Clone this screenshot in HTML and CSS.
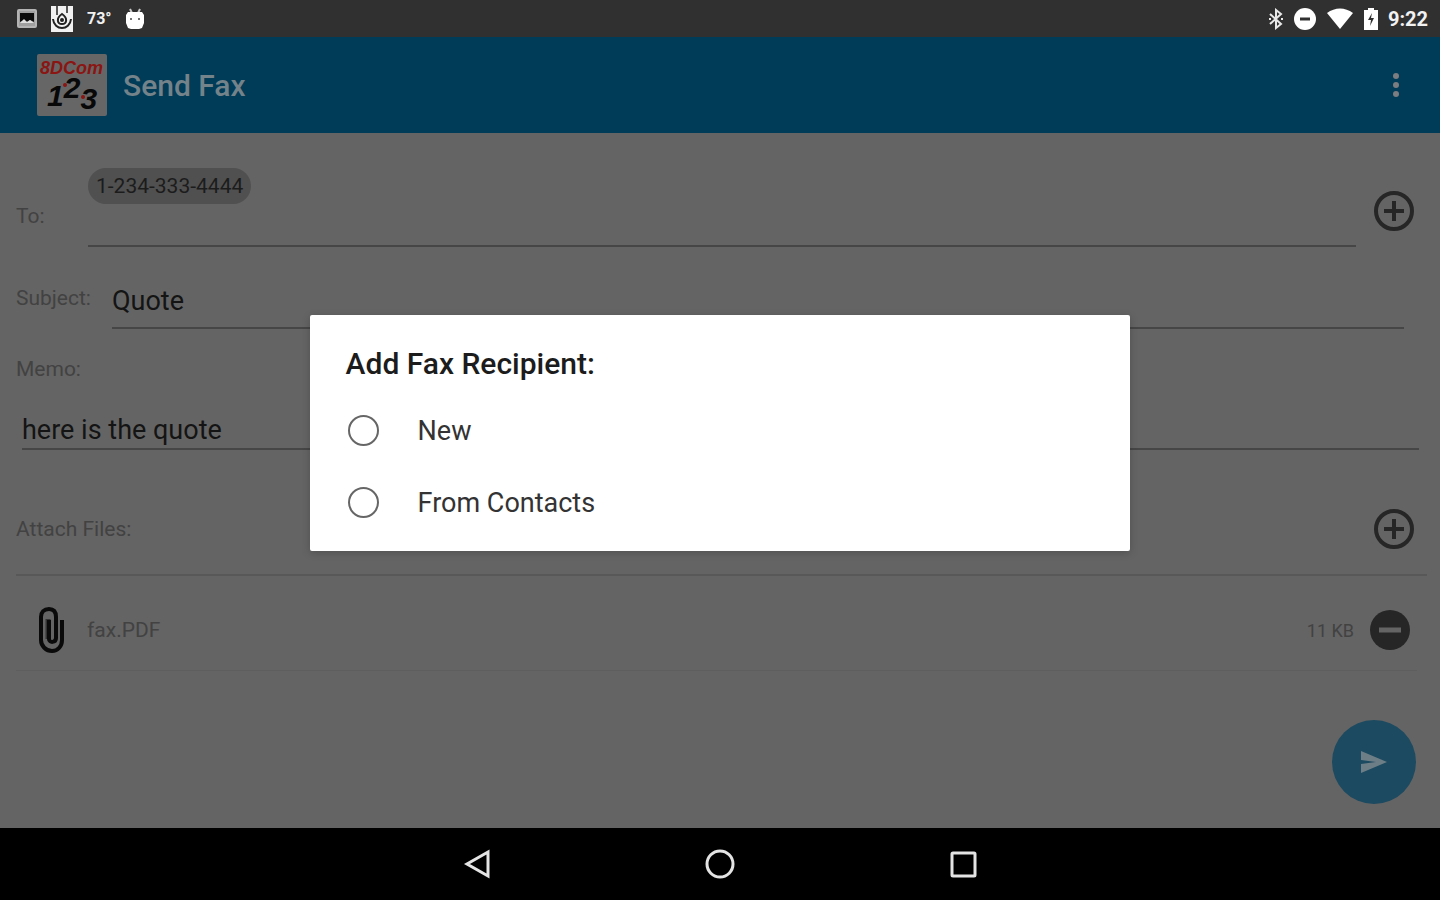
FILE: index.html
```html
<!doctype html>
<html lang="en">
<head>
    <meta charset="UTF-8">
    <meta name="viewport" content="width=device-width, initial-scale=1">
    <title>Send Fax</title>
    <link rel="stylesheet" href="styles.css">
</head>
<body>
    <div class="status-bar">
        <div class="status-left">
            <svg class="picture" width="20" height="20" viewBox="0 0 20 20">
                <rect x="1" y="1" width="18" height="17" rx="1" fill="#a0a0a0" stroke="#b4b4b4" stroke-width="2"/>
                <path d="M3 4h14v9l-4-2-3 2-3-2-4 2z" fill="#0c0c0c"/>
                <path d="M3 14l4-4 3 3 3-2 4 3z" fill="#e0e0e0"/>
            </svg>
            <svg class="app" width="24" height="28" viewBox="0 0 24 28">
                <rect x="1" y="1" width="22" height="26" fill="#f2f2f2"/>
                <path d="M7 1v9M17 1v7" fill="none" stroke="#555" stroke-width="2"/>
                <path d="M3 14c1 12 17 12 18 0" fill="none" stroke="#222" stroke-width="2"/>
                <path d="M12 9c-6 4-5 10 0 10s6-6 0-10z" fill="none" stroke="#222" stroke-width="2"/>
                <circle cx="12" cy="15" r="2" fill="#222"/>
            </svg>
            <span class="temp">73°</span>
            <svg class="droid" width="20" height="22" viewBox="0 0 20 22">
                <path d="M5 1l2 4M15 1l-2 4" stroke="#ccc" stroke-width="2"/>
                <path d="M3 4h14l2 3v8l-2 5-3 1H6l-3-1-2-5V7z" fill="#fff"/>
                <circle cx="6" cy="11" r="1" fill="#444"/>
                <circle cx="14" cy="11" r="1" fill="#444"/>
            </svg>
        </div>
        <div class="status-right">
            <svg width="16" height="22" viewBox="0 0 16 22">
                <path d="M2 6l11 10-5 4V2l5 4L2 16" fill="none" stroke="#e8e8e8" stroke-width="2"/>
                <path d="M1 11h2M13 11h2" stroke="#e8e8e8" stroke-width="2"/>
            </svg>
            <svg class="dnd" width="24" height="24" viewBox="0 0 24 24">
                <circle cx="12" cy="12" r="11" fill="#fff"/>
                <path d="M7 12h10" stroke="#303030" stroke-width="3"/>
            </svg>
            <svg class="wifi" width="28" height="22" viewBox="0 0 28 22">
                <path d="M1 5c8-6 18-6 26 0L14 21z" fill="#fff"/>
            </svg>
            <svg class="battery" width="16" height="24" viewBox="0 0 16 24">
                <path d="M5 1h6v2h4v20H1V3h4z" fill="#fff"/>
                <path d="M9 6l-4 7h3l-1 6 4-8H8z" fill="#303030"/>
            </svg>
            <span class="clock">9:22</span>
        </div>
    </div>

    <header class="app-bar">
        <svg class="logo" width="70" height="62" viewBox="0 0 70 62">
            <rect width="70" height="62" rx="2" fill="#666"/>
            <text class="logo-name" x="3" y="20">8DCom</text>
            <text class="logo-digits" x="10" y="52">1<tspan dy="-8">2</tspan><tspan dy="11">3</tspan></text>
            <circle cx="28" cy="31" r="2" fill="#8a1512"/>
            <circle cx="46" cy="43" r="2" fill="#8a1512"/>
        </svg>
        <h1>Send Fax</h1>
        <button class="more" aria-label="More options">
            <svg width="8" height="28" viewBox="0 0 8 28">
                <circle cx="4" cy="5" r="3"/>
                <circle cx="4" cy="14" r="3"/>
                <circle cx="4" cy="23" r="3"/>
            </svg>
        </button>
    </header>

    <main>
        <form action="">
            <div class="row to-row">
                <label for="to">To:</label>
                <div class="to-field">
                    <span class="chip">1-234-333-4444</span>
                    <input type="text" id="to" name="to">
                </div>
                <button type="button" class="icon-button" aria-label="Add recipient">
                    <svg width="40" height="40" viewBox="0 0 40 40">
                        <circle cx="20" cy="20" r="18"/>
                        <path d="M20 10v20M10 20h20"/>
                    </svg>
                </button>
            </div>
            <div class="row subject-row">
                <label for="subject">Subject:</label>
                <input type="text" id="subject" name="subject" value="Quote">
            </div>
            <div class="memo-row">
                <label for="memo">Memo:</label>
                <input type="text" id="memo" name="memo" value="here is the quote">
            </div>
            <div class="row attach-row">
                <span class="label">Attach Files:</span>
                <button type="button" class="icon-button" aria-label="Attach a file">
                    <svg width="40" height="40" viewBox="0 0 40 40">
                        <circle cx="20" cy="20" r="18"/>
                        <path d="M20 10v20M10 20h20"/>
                    </svg>
                </button>
            </div>
            <div class="row file-row">
                <svg class="clip" width="26" height="48" viewBox="0 0 26 48">
                    <path d="M10 13v20" stroke="#333" stroke-width="5"/>
                    <path d="M24 14v20c0 6-4 11-10 11S3 40 3 34V11c0-5 3-8 8-8s7 3 7 8v21c0 5-7 5-7 1V14"/>
                </svg>
                <span class="file-name">fax.PDF</span>
                <span class="file-size">11 KB</span>
                <button type="button" class="remove" aria-label="Remove fax.PDF">
                    <svg width="40" height="40" viewBox="0 0 40 40">
                        <circle cx="20" cy="20" r="20" fill="#262626"/>
                        <path d="M9 20h22" stroke="#646464" stroke-width="5"/>
                    </svg>
                </button>
            </div>
            <button class="send" aria-label="Send">
                <svg width="28" height="24" viewBox="0 0 28 24">
                    <path d="M1 1l26 11L1 23v-9l15-2-15-2z" fill="#6e7e86"/>
                </svg>
            </button>
        </form>
    </main>

    <nav>
        <button aria-label="Back">
            <svg width="32" height="32" viewBox="0 0 32 32"><path d="M27 4v24L6 16z"/></svg>
        </button>
        <button aria-label="Home">
            <svg width="32" height="32" viewBox="0 0 32 32"><circle cx="16" cy="16" r="13"/></svg>
        </button>
        <button aria-label="Recent apps">
            <svg width="32" height="32" viewBox="0 0 32 32"><rect x="5" y="5" width="23" height="23" rx="1"/></svg>
        </button>
    </nav>

    <div class="overlay">
        <div class="dialog" role="dialog" aria-labelledby="dialog-title">
            <h2 id="dialog-title">Add Fax Recipient:</h2>
            <label class="option"><input type="radio" name="recipient" value="new">New</label>
            <label class="option"><input type="radio" name="recipient" value="contacts">From Contacts</label>
        </div>
    </div>
</body>
</html>
```
FILE: styles.css
```css
*{
    box-sizing: border-box;
}
body{
    display: flex;
    flex-direction: column;
    position: relative;
    min-height: 100vh;
    margin: 0;
    font-family: Roboto, "Liberation Sans", sans-serif;
    background: #646464;
}
h1, h2{
    margin: 0;
    font-size: 30px;
    font-weight: 500;
}
svg{
    display: block;
}
button{
    padding: 0;
    border: none;
    background: none;
    cursor: pointer;
}
input{
    font-family: inherit;
    outline: none;
}

/* status bar */
.status-bar{
    display: flex;
    justify-content: space-between;
    height: 37px;
    padding: 0 12px 0 17px;
    background: #303030;
    color: #f2f2f2;
}
.status-left, .status-right{
    display: flex;
    align-items: center;
}
.status-left{
    gap: 13px;
}
.status-right{
    gap: 9px;
}
.temp{
    font-size: 16px;
    font-weight: 700;
}
.clock{
    font-size: 20px;
    font-weight: 700;
}

/* app bar */
.app-bar{
    display: flex;
    align-items: center;
    height: 96px;
    padding: 0 40px 0 37px;
    background: #003b57;
}
.app-bar h1{
    flex: 1;
    margin-left: 16px;
    color: #74828a;
}
.logo-name{
    font: italic 700 18px "Liberation Sans", sans-serif;
    fill: #8a1512;
}
.logo-digits{
    font: italic 700 30px "Liberation Sans", sans-serif;
    fill: #080808;
}
.more{
    fill: #7b7d80;
}

/* form */
main{
    flex: 1;
    position: relative;
}
form label, .label{
    font-size: 21px;
    line-height: 24px;
    color: #424242;
}
form input{
    flex: 1;
    min-width: 0;
    padding: 2px 0 0;
    border: none;
    border-bottom: 2px solid #464646;
    background: none;
    font-size: 27px;
    color: #141414;
}
.row{
    display: flex;
    align-items: center;
}
.to-row{
    align-items: flex-end;
    padding: 35px 26px 0 16px;
}
.to-row label{
    width: 72px;
    padding-bottom: 19px;
}
.to-field{
    display: flex;
    flex: 1;
    align-items: flex-start;
    height: 79px;
    margin-right: 18px;
    border-bottom: 2px solid #464646;
}
.to-field input{
    height: 36px;
    border: none;
}
.chip{
    padding: 0 8px;
    border-radius: 18px;
    background: #505050;
    font-size: 21px;
    line-height: 36px;
    color: #1c1c1c;
}
.icon-button svg{
    fill: none;
    stroke: #262626;
    stroke-width: 4;
}
.to-row .icon-button{
    margin-bottom: 16px;
}
.subject-row{
    margin-top: 26px;
    padding: 0 36px 0 16px;
}
.subject-row label{
    width: 96px;
    padding-bottom: 6px;
}
.subject-row input{
    height: 56px;
}
.memo-row{
    display: flex;
    flex-direction: column;
    padding: 28px 21px 0 16px;
}
.memo-row input{
    flex: none;
    height: 40px;
    margin: 29px 0 0 6px;
}
.attach-row{
    justify-content: space-between;
    margin: 59px 13px 0 16px;
    padding: 0 13px 25px 0;
    border-bottom: 2px solid #585858;
}
.file-row{
    height: 95px;
    margin: 0 23px 0 16px;
    padding: 14px 7px 0 22px;
    border-bottom: 1px solid #5e5e5e;
}
.clip{
    fill: none;
    stroke: #0a0a0a;
    stroke-width: 4;
}
.file-name{
    flex: 1;
    margin-left: 23px;
    font-size: 21px;
    color: #424242;
}
.file-size{
    margin-right: 16px;
    font-size: 18px;
    color: #424242;
}
.send{
    display: flex;
    position: absolute;
    right: 24px;
    bottom: 24px;
    align-items: center;
    justify-content: center;
    width: 84px;
    height: 84px;
    border-radius: 50%;
    background: #1c4a60;
}

/* navigation bar */
nav{
    display: flex;
    align-items: center;
    justify-content: center;
    gap: 211px;
    height: 72px;
    background: #000;
}
nav svg{
    fill: none;
    stroke: #e4e4e4;
    stroke-width: 3;
}

/* dialog */
.overlay{
    display: flex;
    position: absolute;
    top: 37px;
    right: 0;
    bottom: 72px;
    left: 0;
    align-items: center;
    justify-content: center;
}
.dialog{
    width: 57%;
    padding: 26px 36px 12px;
    border-radius: 2px;
    background: #fff;
    box-shadow: 0 2px 8px rgba(0, 0, 0, 0.2);
}
.dialog h2{
    height: 54px;
    line-height: 46px;
    color: #1c1c1c;
}
.option{
    display: flex;
    align-items: center;
    height: 72px;
    font-size: 27px;
    color: #333;
}
.option input{
    appearance: none;
    width: 31px;
    height: 31px;
    margin: 0 39px 0 2px;
    border: 2px solid #666;
    border-radius: 50%;
}
.option input:checked{
    background: #003b57;
}
```
